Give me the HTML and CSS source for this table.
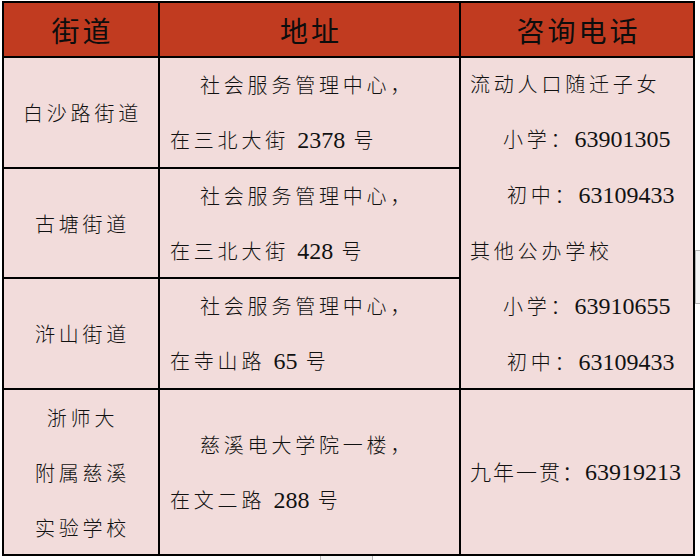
FILE: index.html
```html
<!DOCTYPE html>
<html lang="zh-CN">
<head>
<meta charset="utf-8">
<title>街道咨询电话</title>
<link rel="stylesheet" href="styles.css">
</head>
<body>
<div class="sheet">
  <div class="hd">街道</div>
  <div class="hd">地址</div>
  <div class="hd">咨询电话</div>

  <div class="cell name"><p>白沙路街道</p></div>
  <div class="cell addr">
    <p class="first">社会服务管理中心，</p>
    <p>在三北大街 <span class="num">2378</span> 号</p>
  </div>
  <div class="cell phone">
    <p>流动人口随迁子女</p>
    <p class="in1">小学：<span class="num">63901305</span></p>
    <p class="in2">初中：<span class="num">63109433</span></p>
    <p>其他公办学校</p>
    <p class="in1">小学：<span class="num">63910655</span></p>
    <p class="in2">初中：<span class="num">63109433</span></p>
  </div>

  <div class="cell name"><p>古塘街道</p></div>
  <div class="cell addr">
    <p class="first">社会服务管理中心，</p>
    <p>在三北大街 <span class="num">428</span> 号</p>
  </div>

  <div class="cell name"><p>浒山街道</p></div>
  <div class="cell addr">
    <p class="first">社会服务管理中心，</p>
    <p>在寺山路 <span class="num">65</span> 号</p>
  </div>

  <div class="cell name">
    <p>浙师大</p>
    <p>附属慈溪</p>
    <p>实验学校</p>
  </div>
  <div class="cell addr">
    <p class="first">慈溪电大学院一楼，</p>
    <p>在文二路 <span class="num">288</span> 号</p>
  </div>
  <div class="cell phone2">
    <p class="tight">九年一贯：<span class="num">63919213</span></p>
  </div>
</div>
<div class="mark mark-bottom"></div>
<div class="mark mark-right"></div>
</body>
</html>
```

FILE: styles.css
```css
html, body {
  margin: 0;
  padding: 0;
  background: #ffffff;
}

body {
  position: relative;
  width: 700px;
  height: 560px;
  overflow: hidden;
  font-family: "Noto Sans CJK SC", "Noto Sans CJK JP", sans-serif;
  font-weight: 300;
  color: #111;
}

.sheet {
  display: grid;
  grid-template-columns: 154px 299px 232px;
  grid-template-rows: 53px 109px 108px 109px 164px;
  gap: 2px;
  padding: 2px;
  background: #000;
  width: max-content;
  margin: 1px 0 0 2px;
}

.hd {
  background: #c13b20;
  display: flex;
  align-items: center;
  justify-content: center;
  font-size: 28px;
  letter-spacing: 3px;
  padding-left: 3px;
  color: #0d0d0d;
  font-weight: 400;
}

.cell {
  background: #f2dcdb;
  display: flex;
  flex-direction: column;
  justify-content: center;
}

.cell p {
  margin: 0;
  line-height: 55px;
  font-size: 20px;
  letter-spacing: 3.8px;
  white-space: nowrap;
}

.name {
  align-items: center;
  text-align: center;
}

.name p {
  padding-left: 3px;
}

.addr {
  padding-left: 10px;
}

.addr .first {
  padding-left: 30px;
}

.phone {
  grid-column: 3;
  grid-row: 2 / 5;
  padding-left: 9px;
}

.phone .in1 {
  padding-left: 33px;
}

.phone .in2 {
  padding-left: 37px;
}

.phone2 {
  padding-left: 9px;
}

.phone2 .tight {
  letter-spacing: 2px;
  font-size: 21px;
}

.num {
  font-family: "Liberation Serif", "Times New Roman", serif;
  font-size: 24px;
  letter-spacing: 0;
  font-weight: 400;
}

.mark {
  position: absolute;
  background: #f5f5f5;
  border: 1px solid #b5b5b5;
}

.mark-bottom {
  left: 320px;
  top: 556px;
  width: 51px;
  height: 10px;
  border-top: none;
}

.mark-right {
  left: 695px;
  top: 250px;
  width: 10px;
  height: 52px;
  border-right: none;
}
```
